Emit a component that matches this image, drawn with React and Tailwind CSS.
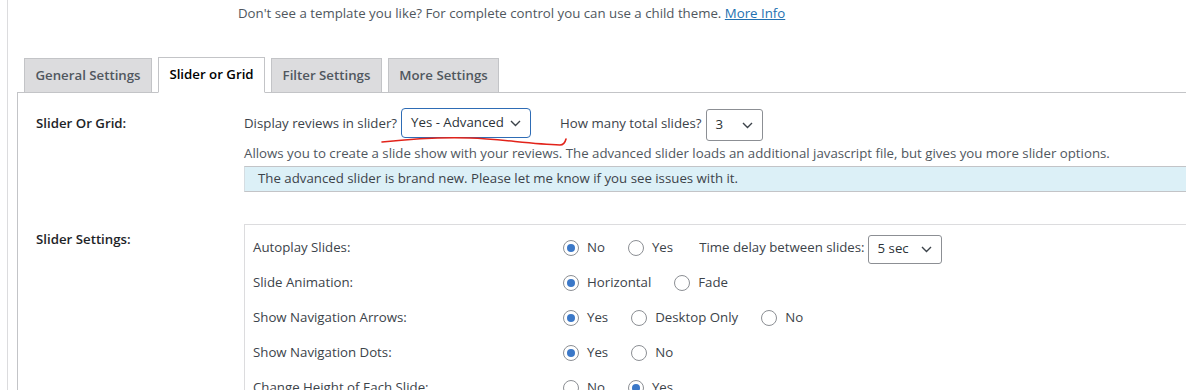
// Review slider settings screen
const Chevron = ({ className = "" }) => (
  <svg width="11" height="7" viewBox="0 0 11 7" className={className}>
    <polyline points="1,1 5.5,5.5 10,1" fill="none" stroke="#3c434a" strokeWidth="1.4" />
  </svg>
);

function Select({ value, width, height, focused }) {
  return (
    <div
      className={`flex items-center justify-between bg-white pl-[9px] pr-[9px] ${focused ? "border-[1.5px] border-[#2e6cb5] rounded-[4px]" : "border border-[#8c8f94] rounded-[3px]"} ${width} ${height}`}
    >
      <span className="text-[#2c3338]">{value}</span>
      <Chevron />
    </div>
  );
}

function Radio({ label, checked }) {
  return (
    <label className="inline-flex items-center gap-[8px] mr-[23px]">
      <span className="w-4 h-4 rounded-full border border-[#8c8f94] bg-white flex items-center justify-center">
        {checked && <span className="w-2 h-2 rounded-full bg-[#3b78c8]" />}
      </span>
      <span>{label}</span>
    </label>
  );
}

function SettingRow({ label, children }) {
  return (
    <div className="flex items-center h-[35px]">
      <div className="w-[310px] shrink-0">{label}</div>
      <div className="flex items-center">{children}</div>
    </div>
  );
}

const tabs = [
  { name: "General Settings", w: "w-[128px]" },
  { name: "Slider or Grid", w: "w-[107px]", active: true },
  { name: "Filter Settings", w: "w-[111px]" },
  { name: "More Settings", w: "w-[111px]" },
];

export default function App() {
  return (
    <div className="relative w-[1186px] h-[390px] overflow-hidden bg-white text-[#3c434a] text-[13.25px] font-['Open_Sans','Noto_Sans',sans-serif]">
      <div className="flex h-full">
        <div className="w-[7px] shrink-0" />
        <div className="flex-1 min-w-0 border-l border-[#dcdcde] pl-[9px]">
          <p className="pt-[3px] pl-[221px] leading-[20px] text-[#50575e] whitespace-nowrap">
            Don't see a template you like? For complete control you can use a child theme.{" "}
            <a className="text-[#2271b1] underline">More Info</a>
          </p>

          {/* tabs */}
          <div className="mt-[34px] pl-[7px] flex items-end gap-[6px]">
            {tabs.map((t) =>
              t.active ? (
                <div
                  key={t.name}
                  className={`${t.w} h-[36px] -mb-px relative z-10 bg-white border border-[#c3c4c7] border-b-white flex items-center justify-center font-semibold text-[#000]`}
                >
                  {t.name}
                </div>
              ) : (
                <div
                  key={t.name}
                  className={`${t.w} h-[35px] -mb-px bg-[#dcdcde] border border-[#c3c4c7] flex items-center justify-center font-semibold text-[#50575e]`}
                >
                  {t.name}
                </div>
              )
            )}
          </div>

          {/* panel */}
          <div className="border-l border-t border-[#c3c4c7] bg-white pt-[15px] pl-[18px] h-[400px]">
            <div className="flex items-start">
              <div className="w-[208px] shrink-0 leading-[30px] font-semibold text-[#1d2327]">Slider Or Grid:</div>
              <div className="flex-1 min-w-0">
                <div className="flex items-start h-[33px] whitespace-nowrap">
                  <span className="leading-[30px]">Display reviews in slider?</span>
                  <div className="ml-[4px]">
                    <Select value="Yes - Advanced" width="w-[130px]" height="h-[30px]" focused />
                  </div>
                  <span className="leading-[30px] ml-[29px]">How many total slides?</span>
                  <div className="ml-[4px] mt-[1px]">
                    <Select value="3" width="w-[57px]" height="h-[32px]" />
                  </div>
                </div>
                <p className="mt-[2px] leading-[20px] text-[#50575e] whitespace-nowrap">
                  Allows you to create a slide show with your reviews. The advanced slider loads an additional javascript file, but gives you more slider options.
                </p>
                <div className="mt-[3px] h-[26px] border-y border-[#c3c4c7] border-l border-l-[#d5dde2] bg-[#dcf0f7] pl-[13px] flex items-center whitespace-nowrap">
                  The advanced slider is brand new. Please let me know if you see issues with it.
                </div>
              </div>
            </div>

            <div className="flex items-start mt-[32px]">
              <div className="w-[208px] shrink-0 mt-[5px] leading-[20px] font-semibold text-[#1d2327]">Slider Settings:</div>
              <div className="flex-1 min-w-0 border-l border-t border-[#dcdcde] pt-[5px] pl-[8px] whitespace-nowrap">
                <SettingRow label="Autoplay Slides:">
                  <Radio label="No" checked />
                  <Radio label="Yes" />
                  <span className="ml-[3px]">Time delay between slides:</span>
                  <div className="ml-[3px] mt-[3px]">
                    <Select value="5 sec" width="w-[74px]" height="h-[29px]" />
                  </div>
                </SettingRow>
                <SettingRow label="Slide Animation:">
                  <Radio label="Horizontal" checked />
                  <Radio label="Fade" />
                </SettingRow>
                <SettingRow label="Show Navigation Arrows:">
                  <Radio label="Yes" checked />
                  <Radio label="Desktop Only" />
                  <Radio label="No" />
                </SettingRow>
                <SettingRow label="Show Navigation Dots:">
                  <Radio label="Yes" checked />
                  <Radio label="No" />
                </SettingRow>
                <SettingRow label="Change Height of Each Slide:">
                  <Radio label="No" />
                  <Radio label="Yes" checked />
                </SettingRow>
              </div>
            </div>
          </div>
        </div>
      </div>

      {/* red pen annotation */}
      <svg className="absolute inset-0 pointer-events-none" width="1186" height="390" viewBox="0 0 1186 390">
        <path
          d="M382 142 C 410 139, 440 137, 470 138 C 500 139, 530 144, 560 145 C 563 145, 565 143, 566 139"
          fill="none"
          stroke="#e2231a"
          strokeWidth="1.6"
          strokeLinecap="round"
        />
      </svg>
    </div>
  );
}
